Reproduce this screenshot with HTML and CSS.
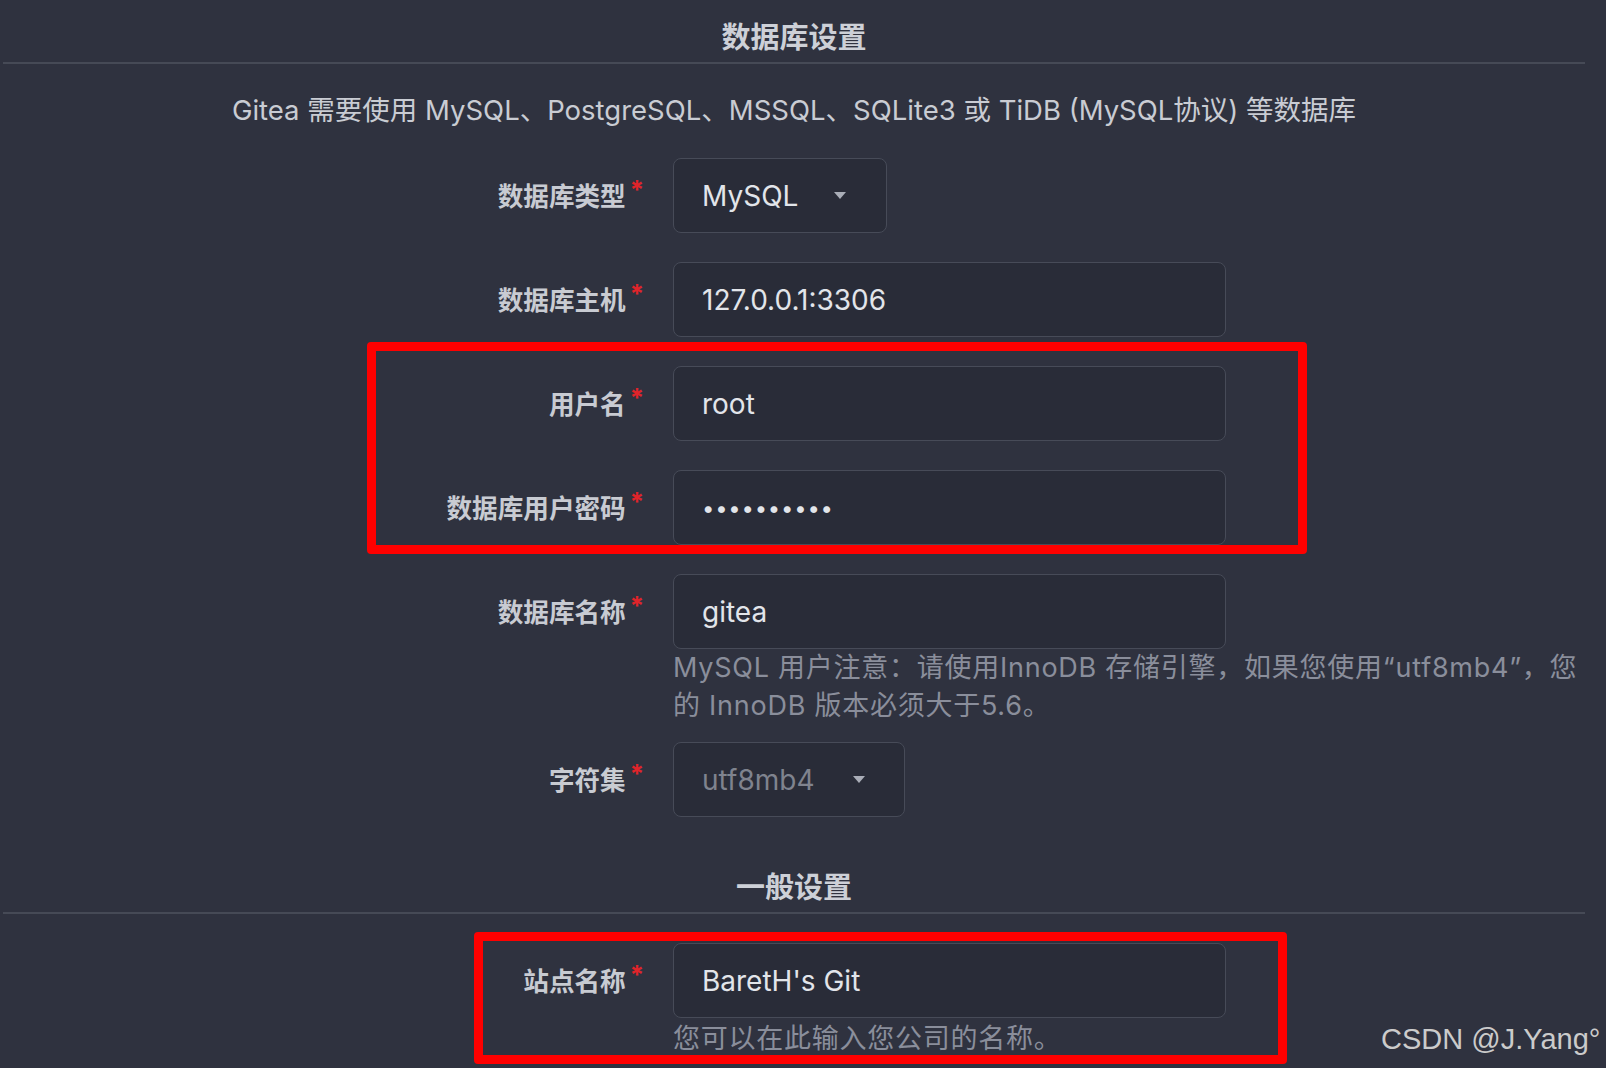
FILE: index.html
```html
<!DOCTYPE html>
<html>

<head>
    <title>Gitea 安装</title>
    <meta charset="utf-8">
    <meta name="viewport" content="width=device-width, initial-scale=1.0">
    <link rel="stylesheet" href="styles.css">
</head>

<body>
    <form class="install-form" name="installForm">
        <h4 class="section-title">数据库设置</h4>
        <p class="section-desc">Gitea 需要使用 MySQL、PostgreSQL、MSSQL、SQLite3 或 TiDB (MySQL协议) 等数据库</p>

        <div class="field">
            <label class="required">数据库类型</label>
            <div class="dropdown dropdown-db">
                <span class="dropdown-text">MySQL</span>
                <span class="caret"></span>
            </div>
        </div>

        <div class="field">
            <label for="dbHost" class="required">数据库主机</label>
            <input type="text" id="dbHost" name="dbHost" value="127.0.0.1:3306">
        </div>

        <div class="field">
            <label for="dbUser" class="required">用户名</label>
            <input type="text" id="dbUser" name="dbUser" value="root">
        </div>

        <div class="field">
            <label for="dbPasswd" class="required">数据库用户密码</label>
            <input type="password" id="dbPasswd" name="dbPasswd" value="0123456789">
        </div>

        <div class="field field-help">
            <label for="dbName" class="required">数据库名称</label>
            <input type="text" id="dbName" name="dbName" value="gitea">
        </div>
        <p class="help help-db">MySQL 用户注意：请使用InnoDB 存储引擎，如果您使用“utf8mb4”，您的 InnoDB 版本必须大于5.6。</p>

        <div class="field">
            <label class="required">字符集</label>
            <div class="dropdown dropdown-charset disabled">
                <span class="dropdown-text">utf8mb4</span>
                <span class="caret"></span>
            </div>
        </div>

        <h4 class="section-title section-general">一般设置</h4>

        <div class="field field-help">
            <label for="appName" class="required">站点名称</label>
            <input type="text" id="appName" name="appName" value="BaretH's Git">
        </div>
        <p class="help help-site">您可以在此输入您公司的名称。</p>
    </form>

    <!-- annotation boxes drawn over the form -->
    <div class="mark mark-db"></div>
    <div class="mark mark-site"></div>
    <div class="watermark">CSDN @J.Yang°</div>
</body>

</html>
```

FILE: styles.css
```css
body {
    margin: 0;
    background-color: #2f323f;
    font-family: Inter, "Noto Sans CJK SC", sans-serif;
    color: #c7cad2;
    width: 1606px;
    height: 1068px;
    overflow: hidden;
    position: relative;
}

.install-form {
    margin-left: 3px;
    width: 1582px;
}

.section-title {
    margin: 0;
    padding: 18px 0 4px;
    font-size: 29px;
    line-height: 40px;
    font-weight: bold;
    text-align: center;
    color: #cdd0d7;
    border-bottom: 2px solid #464a56;
}

.section-general {
    margin-top: 33px;
    margin-bottom: 29px;
}

.section-desc {
    margin: 26px 0 28px;
    font-size: 27.5px;
    line-height: 40px;
    text-align: center;
    color: #c9ccd3;
}

.field {
    display: flex;
    align-items: center;
    margin-bottom: 29px;
}

.field-help {
    margin-bottom: 0;
}

.field label {
    width: 670px;
    box-sizing: border-box;
    padding-right: 29px;
    text-align: right;
    font-size: 25.6px;
    line-height: 36px;
    font-weight: bold;
    color: #c8cbd2;
    white-space: nowrap;
    position: relative;
    top: 1px;
}

.required::after {
    content: "*";
    color: #e0242a;
    font-weight: bold;
    position: relative;
    top: -7px;
    margin-left: 4px;
}

.field input,
.dropdown {
    height: 75px;
    box-sizing: border-box;
    border: 1px solid #474b58;
    border-radius: 8px;
    background-color: #292c38;
    color: #e2e5ea;
    font-family: Inter, "Noto Sans CJK SC", sans-serif;
    font-size: 28px;
}

.field input {
    width: 553px;
    padding: 0 28px;
    outline: none;
}

.field input[type="password"] {
    font-size: 22px;
    letter-spacing: 0.8px;
}

.dropdown {
    display: flex;
    align-items: center;
    justify-content: space-between;
    padding: 0 40px 0 28px;
}

.dropdown-db {
    width: 214px;
}

.dropdown-charset {
    width: 232px;
    padding-right: 39px;
}

.dropdown.disabled .dropdown-text {
    color: #7f838e;
}

.caret {
    width: 0;
    height: 0;
    border-left: 6.5px solid transparent;
    border-right: 6.5px solid transparent;
    border-top: 7px solid #a9adb7;
}

.help {
    margin: 0 0 0 670px;
    font-size: 27px;
    letter-spacing: 0.75px;
    line-height: 37.6px;
    color: #8a8e9b;
}

.help-db {
    margin-bottom: 18px;
}

.help-site {
    margin-top: 2px;
}

.mark {
    position: absolute;
    border: 9px solid #ff0000;
    border-radius: 4px;
    box-sizing: border-box;
}

.mark-db {
    left: 367px;
    top: 342px;
    width: 940px;
    height: 212px;
}

.mark-site {
    left: 474px;
    top: 932px;
    width: 813px;
    height: 132px;
}

.watermark {
    position: absolute;
    left: 1381px;
    top: 1019px;
    font-family: "Liberation Sans", Arial, sans-serif;
    font-size: 29px;
    line-height: 40px;
    color: #cbcbcb;
}
```
